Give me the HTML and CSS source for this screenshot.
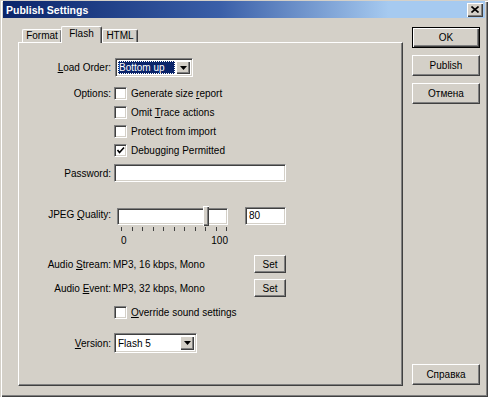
FILE: index.html
```html
<!DOCTYPE html>
<html lang="en">
<head>
    <meta charset="UTF-8">
    <title>Publish Settings</title>
    <link rel="stylesheet" href="styles.css">
</head>
<body>

<div class="window">
    <div class="titlebar">
        <span class="title">Publish Settings</span>
        <span class="close">
            <svg width="8" height="7" viewBox="0 0 8 7"><path d="M0.5 0.5 L7.5 6.5 M7.5 0.5 L0.5 6.5" stroke="#000" stroke-width="1.6"/></svg>
        </span>
    </div>

    <div class="body">
        <div class="tabs-area">
            <div class="tabs">
                <div class="tab tab-format">Format</div>
                <div class="tab tab-flash active">Flash</div>
                <div class="tab tab-html">HTML</div>
            </div>

            <div class="panel">
                <!-- load order -->
                <div class="row row-load">
                    <span class="label"><u>L</u>oad Order:</span>
                    <div class="combo combo-load">
                        <span class="combo-value"><span class="selected">Bottom up</span></span>
                        <span class="combo-arrow"><svg width="7" height="4" viewBox="0 0 7 4"><polygon points="0,0 7,0 3.5,4" fill="#000"/></svg></span>
                    </div>
                </div>

                <!-- options -->
                <div class="options">
                    <div class="row check-row">
                        <span class="label">Options:</span>
                        <span class="check"></span>
                        <span class="check-text">Generate size <u>r</u>eport</span>
                    </div>
                    <div class="row check-row">
                        <span class="label"></span>
                        <span class="check"></span>
                        <span class="check-text">Omit <u>T</u>race actions</span>
                    </div>
                    <div class="row check-row">
                        <span class="label"></span>
                        <span class="check"></span>
                        <span class="check-text">Protect from import</span>
                    </div>
                    <div class="row check-row">
                        <span class="label"></span>
                        <span class="check"><svg width="9" height="9" viewBox="0 0 9 9"><polyline points="1.5,4 3.5,6.5 8,1.5" fill="none" stroke="#000" stroke-width="1.6"/></svg></span>
                        <span class="check-text">Debugging Permitted</span>
                    </div>
                </div>

                <!-- password -->
                <div class="row row-password">
                    <span class="label">Password:</span>
                    <div class="field field-password"></div>
                </div>

                <!-- jpeg quality -->
                <div class="row row-jpeg">
                    <span class="label label-jpeg">JPEG <u>Q</u>uality:</span>
                    <div class="slider-wrap">
                        <div class="slider">
                            <div class="trough"></div>
                            <div class="thumb"></div>
                        </div>
                        <div class="ticks">
                            <i></i><i></i><i></i><i></i><i></i><i></i><i></i><i></i><i></i><i></i><i></i>
                        </div>
                        <div class="scale"><span>0</span><span>100</span></div>
                    </div>
                    <div class="field field-jpeg">80</div>
                </div>

                <!-- audio -->
                <div class="row row-audio row-stream">
                    <span class="label">Audio <u>S</u>tream:</span>
                    <div class="control">
                        <span class="audio-value">MP3, 16 kbps, Mono</span>
                        <button class="btn btn-set">Set</button>
                    </div>
                </div>
                <div class="row row-audio row-event">
                    <span class="label">Audio <u>E</u>vent:</span>
                    <div class="control">
                        <span class="audio-value">MP3, 32 kbps, Mono</span>
                        <button class="btn btn-set">Set</button>
                    </div>
                </div>

                <div class="row check-row row-override">
                    <span class="label"></span>
                    <span class="check"></span>
                    <span class="check-text"><u>O</u>verride sound settings</span>
                </div>

                <!-- version -->
                <div class="row row-version">
                    <span class="label"><u>V</u>ersion:</span>
                    <div class="combo combo-version">
                        <span class="combo-value">Flash 5</span>
                        <span class="combo-arrow"><svg width="7" height="4" viewBox="0 0 7 4"><polygon points="0,0 7,0 3.5,4" fill="#000"/></svg></span>
                    </div>
                </div>
            </div>
        </div>

        <div class="buttons">
            <button class="btn btn-side btn-default">OK</button>
            <button class="btn btn-side">Publish</button>
            <button class="btn btn-side">Отмена</button>
            <button class="btn btn-side btn-help">Справка</button>
        </div>
    </div>
</div>

</body>
</html>
```

FILE: styles.css
```css
body {
    margin: 0;
    background-color: #d4d0c8;
    font-family: "Liberation Sans", Arial, sans-serif;
    font-size: 10px;
    color: #000;
}
.window {
    width: 488px;
    height: 397px;
    box-sizing: border-box;
    padding: 1px 3px 3px 3px;
    background-color: #d4d0c8;
    box-shadow: inset 1px 1px #d4d0c8, inset 2px 2px #fff, inset -1px -1px #404040, inset -2px -2px #808080;
}
.titlebar {
    height: 17px;
    display: flex;
    align-items: center;
    padding: 0 2px 0 3px;
    background: linear-gradient(to right, #0a246a 0%, #3a5fa8 45%, #a6caf0 80%, #a6caf0 100%);
    color: #fff;
    font-weight: bold;
    font-size: 10.5px;
}
.close {
    margin-left: auto;
    width: 16px;
    height: 14px;
    box-sizing: border-box;
    display: flex;
    align-items: center;
    justify-content: center;
    background-color: #d4d0c8;
    box-shadow: inset 1px 1px #fff, inset -1px -1px #404040, inset -2px -2px #808080;
}
.body {
    display: flex;
    padding-top: 8px;
}
.tabs-area {
    margin-left: 15px;
    width: 385px;
}
.tabs {
    display: flex;
    align-items: flex-end;
    height: 16px;
    padding-left: 4px;
    position: relative;
    z-index: 1;
}
.tab {
    box-sizing: border-box;
    height: 13px;
    line-height: 12px;
    text-align: center;
    background-color: #d4d0c8;
    border-top: 1px solid #fff;
    border-left: 1px solid #fff;
    border-right: 1px solid #404040;
    border-radius: 2px 2px 0 0;
    box-shadow: inset -1px 0 #808080;
}
.tab-format {
    width: 40px;
}
.tab-flash {
    width: 41px;
    margin-left: -1px;
}
.tab-html {
    width: 36px;
}
.tab.active {
    height: 17px;
    line-height: 14px;
    margin-bottom: -1px;
    position: relative;
    z-index: 2;
}
.panel {
    box-sizing: border-box;
    height: 344px;
    border: 1px solid;
    border-color: #fff #404040 #404040 #fff;
    box-shadow: inset -1px -1px #808080;
}
.row {
    display: flex;
    align-items: center;
}
.label {
    flex: none;
    width: 92px;
    margin-right: 4px;
    text-align: right;
    white-space: nowrap;
}
.row-load {
    margin-top: 15px;
    height: 19px;
}
.options {
    margin-top: 7px;
}
.check-row {
    height: 19px;
}
.check {
    flex: none;
    box-sizing: border-box;
    width: 13px;
    height: 13px;
    margin-left: -1px;
    display: flex;
    align-items: center;
    justify-content: center;
    background-color: #fff;
    border: 1px solid;
    border-color: #808080 #fff #fff #808080;
    box-shadow: inset 1px 1px #404040, inset -1px -1px #d4d0c8;
}
.check-text {
    margin-left: 4px;
    white-space: nowrap;
}
.field, .combo {
    box-sizing: border-box;
    background-color: #fff;
    border: 1px solid;
    border-color: #808080 #fff #fff #808080;
    box-shadow: inset 1px 1px #404040, inset -1px -1px #d4d0c8;
}
.combo {
    display: flex;
    align-items: center;
    padding: 2px;
}
.combo-value {
    flex: 1;
    padding-left: 1px;
    white-space: nowrap;
}
.selected {
    display: block;
    background-color: #0a246a;
    color: #fff;
    line-height: 13px;
    padding-left: 1px;
    outline: 1px dotted #fff;
    outline-offset: -1px;
}
.combo-arrow {
    flex: none;
    box-sizing: border-box;
    width: 14px;
    height: 100%;
    display: flex;
    align-items: center;
    justify-content: center;
    background-color: #d4d0c8;
    box-shadow: inset 1px 1px #fff, inset -1px -1px #404040, inset -2px -2px #808080;
}
.combo-load {
    width: 78px;
    height: 19px;
}
.combo-load .combo-value {
    padding-left: 0;
    margin-right: 1px;
}
.row-password {
    margin-top: 4px;
    height: 18px;
}
.field-password {
    width: 172px;
    height: 18px;
    margin-left: -1px;
}
.row-jpeg {
    margin-top: 24px;
    align-items: flex-start;
}
.label-jpeg {
    line-height: 18px;
}
.slider-wrap {
    margin-left: 2px;
    margin-top: 2px;
    width: 111px;
}
.slider {
    position: relative;
    height: 17px;
}
.trough {
    box-sizing: border-box;
    height: 17px;
    background-color: #fff;
    border: 1px solid;
    border-color: #808080 #fff #fff #808080;
    box-shadow: inset 1px 1px #404040, inset -1px -1px #d4d0c8;
}
.thumb {
    position: absolute;
    left: 86px;
    top: -2px;
    width: 6px;
    height: 20px;
    box-sizing: border-box;
    background-color: #d4d0c8;
    box-shadow: inset 1px 1px #fff, inset -1px -1px #404040, inset -2px -2px #808080;
}
.ticks {
    display: flex;
    justify-content: space-between;
    width: 106px;
    height: 4px;
    margin: 2px 0 0 4px;
}
.ticks i {
    width: 1px;
    height: 4px;
    background-color: #404040;
}
.scale {
    display: flex;
    justify-content: space-between;
    margin-top: 5px;
    padding-left: 4px;
    line-height: 10px;
}
.field-jpeg {
    margin-left: 17px;
    margin-top: 1px;
    width: 41px;
    height: 18px;
    line-height: 16px;
    padding-left: 3px;
}
.control {
    display: flex;
    align-items: center;
    width: 171px;
}
.audio-value {
    margin-left: -2px;
    white-space: nowrap;
}
.row-stream {
    margin-top: 9px;
    height: 18px;
}
.row-event {
    margin-top: 6px;
    height: 18px;
}
.btn {
    box-sizing: border-box;
    padding: 0;
    font: inherit;
    color: #000;
    background-color: #d4d0c8;
    border: 1px solid;
    border-color: #fff #404040 #404040 #fff;
    box-shadow: inset -1px -1px #808080;
    cursor: pointer;
}
.btn-set {
    margin-left: auto;
    width: 32px;
    height: 18px;
}
.row-override {
    margin-top: 8px;
    height: 14px;
}
.row-version {
    margin-top: 14px;
    height: 20px;
}
.combo-version {
    width: 83px;
    height: 20px;
    margin-left: -1px;
}
.buttons {
    display: flex;
    flex-direction: column;
    margin-left: 9px;
    width: 68px;
    height: 360px;
    box-sizing: border-box;
    padding: 1px 0;
}
.btn-side {
    width: 68px;
    height: 21px;
    margin-bottom: 7px;
}
.btn-default {
    border-color: #000;
    box-shadow: inset 1px 1px #fff, inset -1px -1px #404040, inset -2px -2px #808080;
}
.btn-help {
    margin-top: auto;
    margin-bottom: 0;
}
```
